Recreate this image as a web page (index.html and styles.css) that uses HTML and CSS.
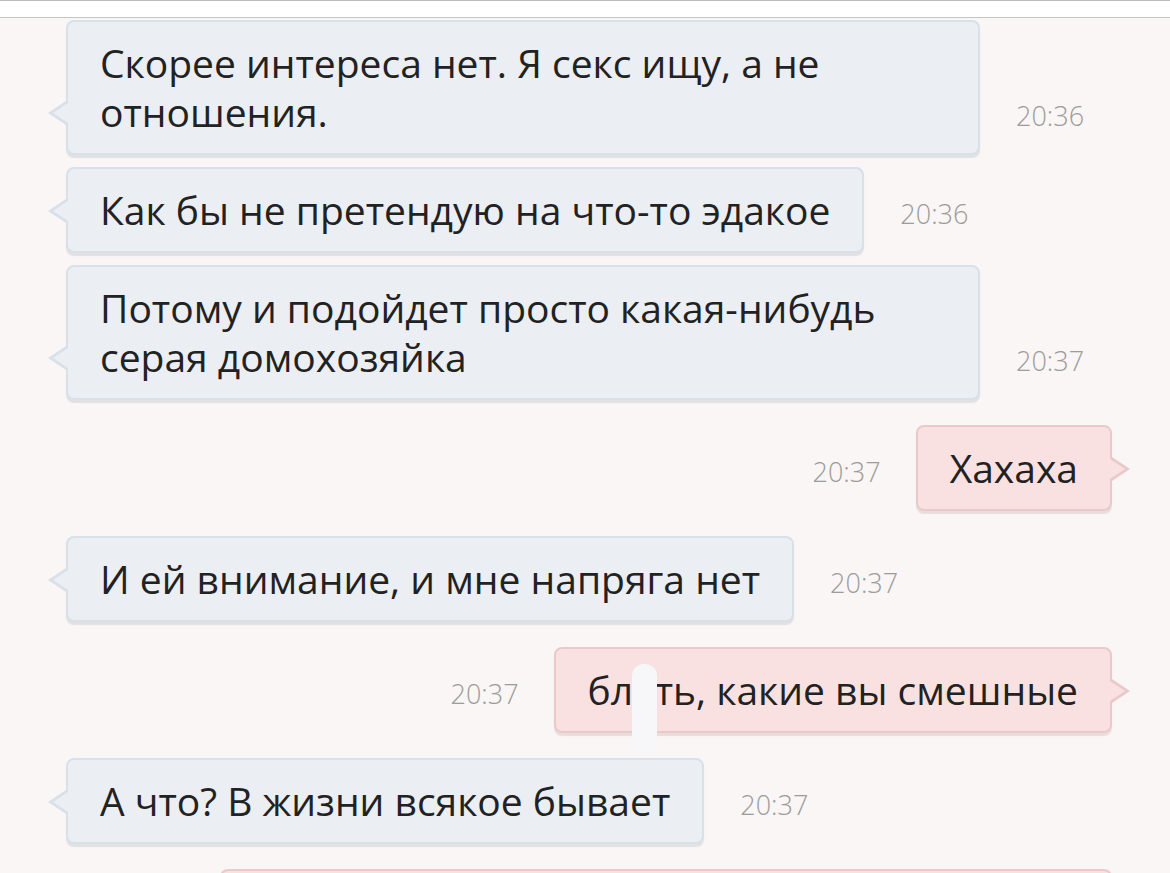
FILE: index.html
```html
<!DOCTYPE html>
<html lang="ru">
<head>
  <meta charset="UTF-8" />
  <title>Чат</title>
  <link rel="stylesheet" href="styles.css">
</head>
<body>
  <div class="topbar"></div>

  <div class="chat">
    <div class="row in">
      <div class="bubble">Скорее интереса нет. Я секс ищу, а не отношения.</div>
      <div class="time">20:36</div>
    </div>

    <div class="row in same">
      <div class="bubble">Как бы не претендую на что-то эдакое</div>
      <div class="time">20:36</div>
    </div>

    <div class="row in same">
      <div class="bubble">Потому и подойдет просто какая-нибудь серая домохозяйка</div>
      <div class="time">20:37</div>
    </div>

    <div class="row out">
      <div class="time">20:37</div>
      <div class="bubble">Хахаха</div>
    </div>

    <div class="row in">
      <div class="bubble">И ей внимание, и мне напряга нет</div>
      <div class="time">20:37</div>
    </div>

    <div class="row out">
      <div class="time">20:37</div>
      <div class="bubble">блять, какие вы смешные<span class="scratch"></span></div>
    </div>

    <div class="row in">
      <div class="bubble">А что? В жизни всякое бывает</div>
      <div class="time">20:37</div>
    </div>

    <div class="row out">
      <div class="bubble cut"></div>
    </div>
  </div>
</body>
</html>
```

FILE: styles.css
```css
html, body {
  margin: 0;
  height: 873px;
  overflow: hidden;
}
body {
  font-family: "Open Sans", "Noto Sans", sans-serif;
  background: #f9f6f5;
  color: #222;
}
.topbar {
  height: 16px;
  background: #fff;
  border-top: 1px solid #bcbcbc;
  border-bottom: 1px solid #c4c4c4;
}
.chat {
  padding: 2px 58px 0 66px;
  display: flex;
  flex-direction: column;
}
.row {
  display: flex;
  align-items: flex-end;
  margin-top: 25px;
}
.row:first-child {
  margin-top: 0;
}
.row.same {
  margin-top: 12px;
}
.row.out {
  justify-content: flex-end;
}
.bubble {
  position: relative;
  max-width: 846px;
  padding: 16px 32px 17px;
  font-size: 39px;
  line-height: 49px;
  border-radius: 8px;
  border: 2px solid #d8e0e9;
  background: #ebeef3;
  box-shadow: 0 3px 1px rgba(120, 130, 150, 0.18);
}
.out .bubble {
  background: #f9e1e2;
  border-color: #ebc9cb;
  box-shadow: 0 3px 1px rgba(150, 110, 110, 0.18);
}
/* хвостик пузыря */
.bubble::before,
.bubble::after {
  content: "";
  position: absolute;
  bottom: 28px;
  width: 0;
  height: 0;
  border-top: 12px solid transparent;
  border-bottom: 12px solid transparent;
}
.in .bubble::before {
  left: -20px;
  border-right: 18px solid #d8e0e9;
}
.in .bubble::after {
  left: -15px;
  bottom: 30px;
  border-top-width: 10px;
  border-bottom-width: 10px;
  border-right: 15px solid #ebeef3;
}
.out .bubble::before {
  right: -20px;
  border-left: 18px solid #ebc9cb;
}
.out .bubble::after {
  right: -15px;
  bottom: 30px;
  border-top-width: 10px;
  border-bottom-width: 10px;
  border-left: 15px solid #f9e1e2;
}
.time {
  font-size: 27px;
  font-weight: 300;
  color: #9c9c9c;
  line-height: 40px;
}
.out .time {
  margin: 0 35px 19px 0;
}
.in .time {
  margin: 0 0 19px 36px;
}
.scratch {
  position: absolute;
  left: 76px;
  top: 15px;
  width: 25px;
  height: 90px;
  border-radius: 12px 12px 0 0;
  background: #f7f7fa;
}
.bubble.cut {
  width: 824px;
  height: 80px;
}
```
